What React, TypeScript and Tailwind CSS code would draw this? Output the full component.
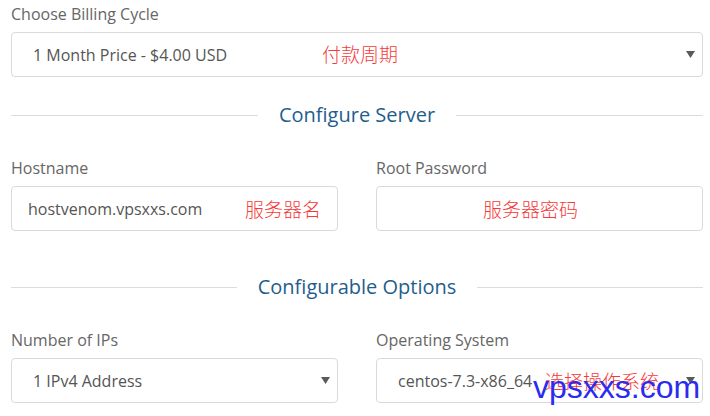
import React from "react";

const Arrow = () => (
  <svg width="9" height="7" viewBox="0 0 9 7" className="shrink-0">
    <path d="M0 0 H9 L4.5 7 Z" fill="#5a5a5a" />
  </svg>
);

const Note = ({ children, className }: { children: React.ReactNode; className: string }) => (
  <span
    className={"absolute text-[19px] leading-none text-[#f53a3a] " + className}
    style={{ fontFamily: '"Noto Sans CJK SC", sans-serif', fontWeight: 300 }}
  >
    {children}
  </span>
);

const Divider = ({ title }: { title: string }) => (
  <div className="flex h-[20px] items-center gap-[21px]">
    <div className="h-px flex-1 bg-[#dcdcdc]" />
    <div className="text-[20px] leading-[20px] text-[#1f5e8c]">{title}</div>
    <div className="h-px flex-1 bg-[#dcdcdc]" />
  </div>
);

const Box = ({ children }: { children: React.ReactNode }) => (
  <div className="relative flex h-[45px] items-center rounded-[4px] border border-[#dadada] bg-white">
    {children}
  </div>
);

const Label = ({ children }: { children: React.ReactNode }) => (
  <div className="text-[16px] leading-[20px] text-[#666]">{children}</div>
);

export default function App() {
  return (
    <div
      className="relative h-[416px] w-[710px] overflow-hidden bg-white pl-[11px] pr-[7px] text-[#555]"
      style={{ fontFamily: '"Open Sans", sans-serif' }}
    >
      <div className="pt-[4px]">
        <Label>Choose Billing Cycle</Label>
      </div>
      <div className="mt-[8px]">
        <Box>
          <span className="pl-[21px] text-[16px] text-[#555]">1 Month Price - $4.00 USD</span>
          <Note className="left-[310px] top-[11px]">付款周期</Note>
          <span className="ml-auto mr-[7px]">
            <Arrow />
          </span>
        </Box>
      </div>

      <div className="mt-[28px]">
        <Divider title="Configure Server" />
      </div>

      <div className="mt-[33px] grid grid-cols-2 gap-x-[38px]">
        <div>
          <Label>Hostname</Label>
          <div className="mt-[8px]">
            <Box>
              <span className="pl-[16px] text-[16px] text-[#555]">hostvenom.vpsxxs.com</span>
              <Note className="left-[233px] top-[12px]">服务器名</Note>
            </Box>
          </div>
        </div>
        <div>
          <Label>Root Password</Label>
          <div className="mt-[8px]">
            <Box>
              <Note className="left-[106px] top-[12px]">服务器密码</Note>
            </Box>
          </div>
        </div>
      </div>

      <div className="mt-[46px]">
        <Divider title="Configurable Options" />
      </div>

      <div className="mt-[33px] grid grid-cols-2 gap-x-[38px]">
        <div>
          <Label>Number of IPs</Label>
          <div className="mt-[8px]">
            <Box>
              <span className="pl-[21px] text-[16px] text-[#555]">1 IPv4 Address</span>
              <span className="ml-auto mr-[7px]">
                <Arrow />
              </span>
            </Box>
          </div>
        </div>
        <div>
          <Label>Operating System</Label>
          <div className="mt-[8px]">
            <Box>
              <span className="pl-[21px] text-[16px] text-[#555]">centos-7.3-x86_64</span>
              <Note className="left-[168px] top-[12px]">选择操作系统</Note>
              <span className="ml-auto mr-[7px]">
                <Arrow />
              </span>
            </Box>
          </div>
        </div>
      </div>

      <div
        className="absolute left-[533px] top-[371px] text-[32px] leading-[32px] text-[#2b2bf0]"
        style={{ fontFamily: '"Liberation Sans", Arial, sans-serif' }}
      >
        vpsxxs.com
      </div>
    </div>
  );
}
